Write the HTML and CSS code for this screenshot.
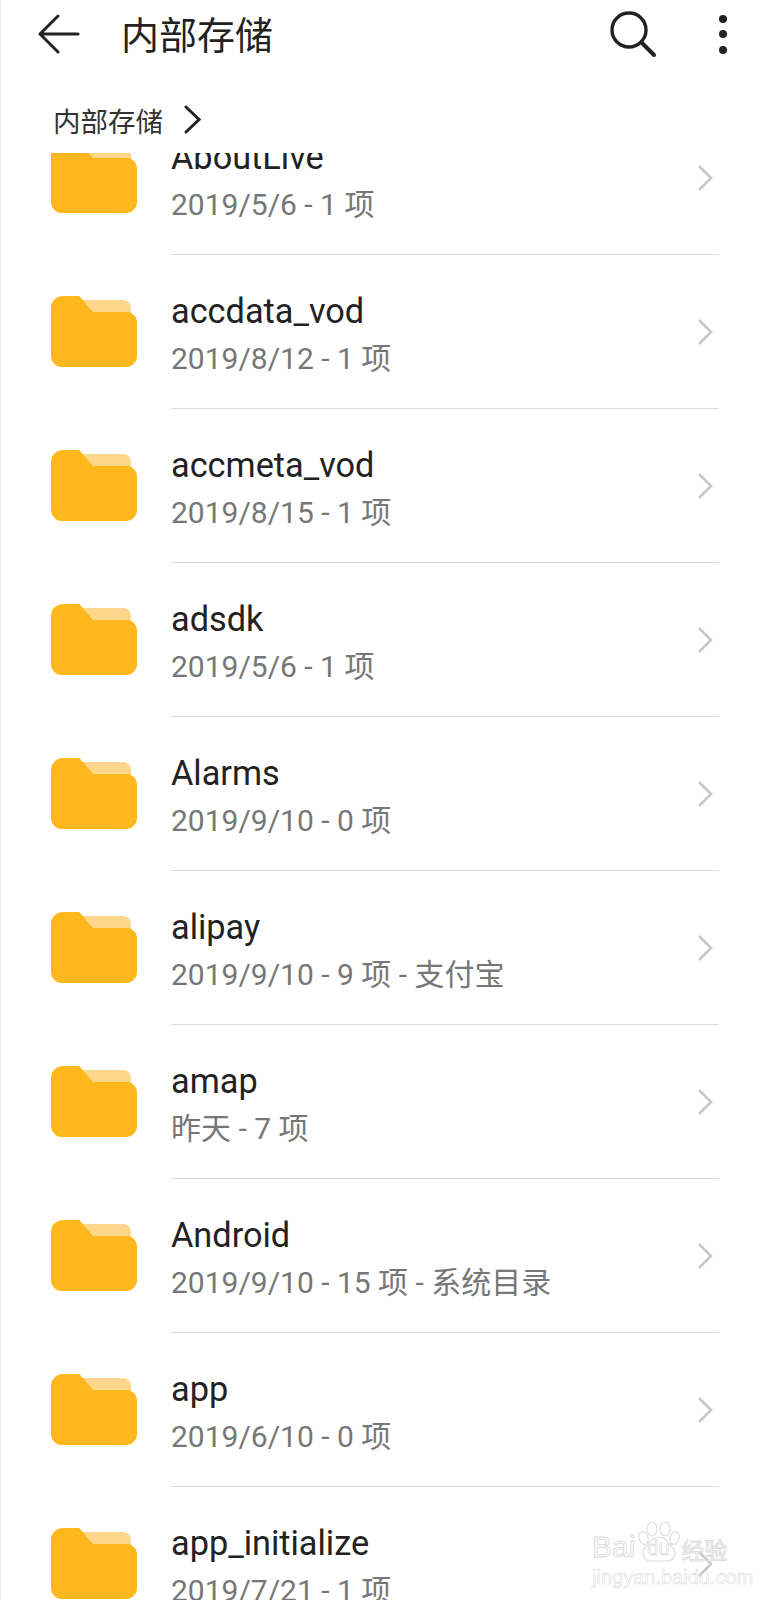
FILE: index.html
```html
<!DOCTYPE html>
<html lang="zh-CN">

<head>
    <meta charset="UTF-8">
    <meta name="viewport" content="width=device-width, initial-scale=1.0">
    <title>内部存储</title>
    <link rel="stylesheet" href="styles.css">
</head>

<body>
    <svg class="defs" width="0" height="0">
        <symbol id="folder" viewBox="0 0 86 71">
            <path fill="#fed78c" d="M30 4H72a8 8 0 0 1 8 8V24H40Z"/>
            <path fill="#feb71c" d="M12 0H27a4 4 0 0 1 3 2L42 16H76a10 10 0 0 1 10 10V60a11 11 0 0 1-11 11H11A11 11 0 0 1 0 60V12A12 12 0 0 1 12 0Z"/>
        </symbol>
        <symbol id="chev" viewBox="0 0 16 28">
            <path fill="none" stroke="#c8c8c8" stroke-width="2.6" d="M2 2L14 14L2 26"/>
        </symbol>
    </svg>

    <div class="page">
        <header class="topbar">
            <svg class="back" width="42" height="40" viewBox="0 0 42 40">
                <path fill="none" stroke="#222" stroke-width="3" stroke-linecap="round" stroke-linejoin="round" d="M40 20H2M20 2L2 20L20 38"/>
            </svg>
            <h1>内部存储</h1>
            <svg class="search" width="48" height="48" viewBox="0 0 48 48">
                <circle cx="20" cy="20" r="17" fill="none" stroke="#222" stroke-width="3.4"/>
                <path stroke="#222" stroke-width="4" stroke-linecap="round" d="M33 33L45 45"/>
            </svg>
            <div class="more"><i></i><i></i><i></i></div>
        </header>

        <div class="crumb">
            <span>内部存储</span>
            <svg width="17" height="29" viewBox="0 0 17 29">
                <path fill="none" stroke="#222" stroke-width="3" stroke-linecap="round" d="M2 2L15 14.500L2 27"/>
            </svg>
        </div>

        <ul class="files">
            <li>
                <svg class="folder"><use href="#folder"/></svg>
                <div class="info">
                    <p class="name">AboutLive</p>
                    <p class="meta">2019/5/6 - 1 项</p>
                </div>
                <svg class="chev"><use href="#chev"/></svg>
            </li>
            <li>
                <svg class="folder"><use href="#folder"/></svg>
                <div class="info">
                    <p class="name">accdata_vod</p>
                    <p class="meta">2019/8/12 - 1 项</p>
                </div>
                <svg class="chev"><use href="#chev"/></svg>
            </li>
            <li>
                <svg class="folder"><use href="#folder"/></svg>
                <div class="info">
                    <p class="name">accmeta_vod</p>
                    <p class="meta">2019/8/15 - 1 项</p>
                </div>
                <svg class="chev"><use href="#chev"/></svg>
            </li>
            <li>
                <svg class="folder"><use href="#folder"/></svg>
                <div class="info">
                    <p class="name">adsdk</p>
                    <p class="meta">2019/5/6 - 1 项</p>
                </div>
                <svg class="chev"><use href="#chev"/></svg>
            </li>
            <li>
                <svg class="folder"><use href="#folder"/></svg>
                <div class="info">
                    <p class="name">Alarms</p>
                    <p class="meta">2019/9/10 - 0 项</p>
                </div>
                <svg class="chev"><use href="#chev"/></svg>
            </li>
            <li>
                <svg class="folder"><use href="#folder"/></svg>
                <div class="info">
                    <p class="name">alipay</p>
                    <p class="meta">2019/9/10 - 9 项 - 支付宝</p>
                </div>
                <svg class="chev"><use href="#chev"/></svg>
            </li>
            <li>
                <svg class="folder"><use href="#folder"/></svg>
                <div class="info">
                    <p class="name">amap</p>
                    <p class="meta">昨天 - 7 项</p>
                </div>
                <svg class="chev"><use href="#chev"/></svg>
            </li>
            <li>
                <svg class="folder"><use href="#folder"/></svg>
                <div class="info">
                    <p class="name">Android</p>
                    <p class="meta">2019/9/10 - 15 项 - 系统目录</p>
                </div>
                <svg class="chev"><use href="#chev"/></svg>
            </li>
            <li>
                <svg class="folder"><use href="#folder"/></svg>
                <div class="info">
                    <p class="name">app</p>
                    <p class="meta">2019/6/10 - 0 项</p>
                </div>
                <svg class="chev"><use href="#chev"/></svg>
            </li>
            <li>
                <svg class="folder"><use href="#folder"/></svg>
                <div class="info">
                    <p class="name">app_initialize</p>
                    <p class="meta">2019/7/21 - 1 项</p>
                </div>
                <svg class="chev"><use href="#chev"/></svg>
            </li>
        </ul>

        <div class="watermark">
            <div class="mark-logo">
                <span>Bai</span>
                <div class="mark-paw">
                    <svg width="42" height="41" viewBox="0 0 42 41">
                        <g fill="none" stroke="#dedede" stroke-width="1.2">
                            <ellipse cx="5.500" cy="17" rx="4.500" ry="6.500" transform="rotate(-20 5.500 17)"/>
                            <ellipse cx="14" cy="8" rx="5" ry="7"/>
                            <ellipse cx="27" cy="8" rx="5" ry="7"/>
                            <ellipse cx="36.500" cy="17" rx="4.500" ry="6.500" transform="rotate(20 36.500 17)"/>
                            <path d="M21 16C14 16 12 22 8 26C2 32 6 40 13 40H29C36 40 40 32 34 26C30 22 28 16 21 16Z"/>
                        </g>
                    </svg>
                    <span class="mark-du">du</span>
                </div>
                <span class="mark-cn">经验</span>
            </div>
            <div class="mark-url">jingyan.baidu.com</div>
        </div>
    </div>
</body>

</html>
```

FILE: styles.css
```css
* {
    margin: 0;
    padding: 0;
    box-sizing: border-box;
}

html,
body {
    height: 100%;
    background-color: white;
}

body {
    font-family: Roboto, "Noto Sans CJK SC", sans-serif;
    color: #222;
}

.defs {
    display: block;
    height: 0;
}

.page {
    position: relative;
    height: 1600px;
    overflow: hidden;
    border-left: 1px solid #ececec;
}

.topbar {
    display: flex;
    align-items: center;
    height: 68px;
    padding-left: 37px;
}

.back {
    flex: none;
}

.topbar h1 {
    flex: 1;
    margin-left: 41px;
    padding-top: 4px;
    font-size: 38px;
    font-weight: 400;
    line-height: 70px;
}

.search {
    flex: none;
    margin-right: 62px;
}

.more {
    display: flex;
    flex-direction: column;
    gap: 7.500px;
    width: 8px;
    margin-right: 43px;
}

.more i {
    display: block;
    width: 8px;
    height: 8px;
    border-radius: 50%;
    background-color: #222;
}

.crumb {
    display: flex;
    align-items: center;
    gap: 21px;
    height: 85px;
    padding-top: 18px;
    padding-left: 52px;
    font-size: 27.500px;
    color: #333;
}

.files {
    list-style: none;
    height: 1447px;
    overflow: hidden;
}

/* lista rolada, a primeira linha fica cortada */
.files li:first-child {
    margin-top: -52px;
}

.files li {
    position: relative;
    display: flex;
    align-items: center;
    height: 154px;
    padding-left: 50px;
}

.files li::after {
    content: "";
    position: absolute;
    left: 170px;
    right: 51px;
    bottom: 0;
    height: 1px;
    background-color: #dcdcdc;
}

.folder {
    flex: none;
    width: 86px;
    height: 71px;
    margin-bottom: 2px;
}

.info {
    flex: 1;
    margin-left: 34px;
    padding-top: 6px;
}

.name {
    font-size: 34.300px;
    line-height: 44px;
    color: #222;
}

.meta {
    margin-top: 4px;
    font-size: 30px;
    line-height: 44px;
    color: #777;
}

.chev {
    flex: none;
    width: 16px;
    height: 28px;
    margin-right: 57px;
    margin-bottom: 1px;
}

.watermark {
    position: absolute;
    left: 591px;
    top: 1518px;
    width: 140px;
    color: transparent;
    font-family: "Liberation Sans", sans-serif;
    -webkit-text-stroke: 1px #dedede;
}

.mark-logo {
    display: flex;
    align-items: flex-end;
    height: 44px;
    font-size: 30px;
    line-height: 30px;
}

.mark-paw {
    position: relative;
    flex: none;
    width: 42px;
    height: 41px;
    margin-left: 3px;
}

.mark-paw svg {
    display: block;
}

.mark-du {
    position: absolute;
    left: 9px;
    bottom: 4px;
    font-size: 20px;
    line-height: 20px;
    -webkit-text-stroke: 0.8px #dedede;
}

.mark-cn {
    margin-left: 1px;
    font-family: "Noto Sans CJK SC", sans-serif;
    font-size: 23px;
    line-height: 26px;
}

.mark-url {
    margin-top: 4px;
    font-size: 20px;
    line-height: 22px;
    -webkit-text-stroke: 0.6px #dedede;
}
```
